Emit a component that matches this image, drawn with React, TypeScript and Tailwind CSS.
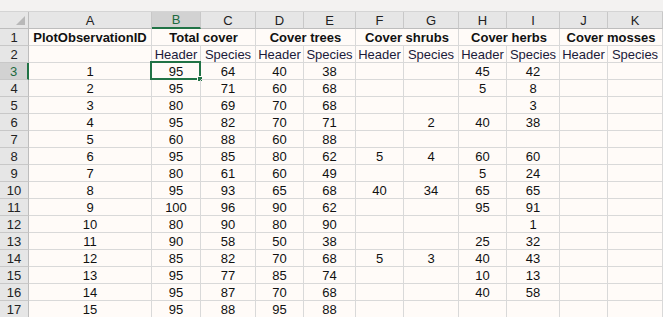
import React from "react";

const cols = [
  { key: "A", w: "w-[123px]" },
  { key: "B", w: "w-[49px]" },
  { key: "C", w: "w-[55px]" },
  { key: "D", w: "w-[48px]" },
  { key: "E", w: "w-[52px]" },
  { key: "F", w: "w-[48px]" },
  { key: "G", w: "w-[55px]" },
  { key: "H", w: "w-[48px]" },
  { key: "I", w: "w-[53px]" },
  { key: "J", w: "w-[48px]" },
  { key: "K", w: "w-[55px]" },
];

// merged header cells of row 1: label + column span + width
const groups = [
  { label: "Total cover", w: "w-[104px]" },
  { label: "Cover trees", w: "w-[100px]" },
  { label: "Cover shrubs", w: "w-[103px]" },
  { label: "Cover herbs", w: "w-[101px]" },
  { label: "Cover mosses", w: "w-[103px]" },
];

const data: (string | number)[][] = [
  [1, 95, 64, 40, 38, "", "", 45, 42, "", ""],
  [2, 95, 71, 60, 68, "", "", 5, 8, "", ""],
  [3, 80, 69, 70, 68, "", "", "", 3, "", ""],
  [4, 95, 82, 70, 71, "", 2, 40, 38, "", ""],
  [5, 60, 88, 60, 88, "", "", "", "", "", ""],
  [6, 95, 85, 80, 62, 5, 4, 60, 60, "", ""],
  [7, 80, 61, 60, 49, "", "", 5, 24, "", ""],
  [8, 95, 93, 65, 68, 40, 34, 65, 65, "", ""],
  [9, 100, 96, 90, 62, "", "", 95, 91, "", ""],
  [10, 80, 90, 80, 90, "", "", "", 1, "", ""],
  [11, 90, 58, 50, 38, "", "", 25, 32, "", ""],
  [12, 85, 82, 70, 68, 5, 3, 40, 43, "", ""],
  [13, 95, 77, 85, 74, "", "", 10, 13, "", ""],
  [14, 95, 87, 70, 68, "", "", 40, 58, "", ""],
  [15, 95, 88, 95, 88, "", "", "", "", "", ""],
];

function RowHead({ n, active }: { n: number; active?: boolean }) {
  return (
    <div
      className={
        "w-[29px] shrink-0 h-[17px] flex items-center justify-center border-b border-[#c8c8c8] " +
        (active
          ? "bg-[#d2d2d2] text-[#1d6a40] border-r-2 border-r-[#217346]"
          : "bg-[#e6e6e6] text-[#222] border-r border-r-[#bdbdbd]")
      }
    >
      {n}
    </div>
  );
}

export default function App() {
  return (
    <div
      className="w-[663px] h-[317px] overflow-hidden bg-[#fffbf8] text-[13px] leading-none text-[#111]"
      style={{ fontFamily: "'Liberation Sans', Arial, sans-serif" }}
    >
      {/* formula bar strip */}
      <div className="h-[12px] bg-[#f3f2f1] border-b border-[#d4d4d4]" />

      {/* column letters */}
      <div className="flex h-[17px]">
        <div className="w-[29px] shrink-0 bg-[#e6e6e6] border-r border-b border-[#bdbdbd] relative">
          <div className="absolute right-[3px] bottom-[3px] w-0 h-0 border-l-[9px] border-l-transparent border-b-[9px] border-b-[#b8b8b8]" />
        </div>
        {cols.map((c) => (
          <div
            key={c.key}
            className={
              c.w +
              " shrink-0 flex items-center justify-center border-r border-[#c8c8c8] " +
              (c.key === "B"
                ? "bg-[#d2d2d2] text-[#1d6a40] border-b-2 border-b-[#217346]"
                : "bg-[#e6e6e6] text-[#222] border-b border-b-[#bdbdbd]")
            }
          >
            {c.key}
          </div>
        ))}
      </div>

      {/* row 1: group titles */}
      <div className="flex h-[17px]">
        <RowHead n={1} />
        <div className="w-[123px] shrink-0 flex items-center justify-center font-bold border-r border-b border-[#d9d9d9]">
          PlotObservationID
        </div>
        {groups.map((g) => (
          <div
            key={g.label}
            className={g.w + " shrink-0 flex items-center justify-center font-bold border-r border-b border-[#d9d9d9]"}
          >
            {g.label}
          </div>
        ))}
      </div>

      {/* row 2: sub headers */}
      <div className="flex h-[17px]">
        <RowHead n={2} />
        {cols.map((c, i) => (
          <div
            key={c.key}
            className={c.w + " shrink-0 flex items-center justify-center text-[#1a1a3a] border-r border-b border-[#d9d9d9]"}
          >
            {i === 0 ? "" : i % 2 === 1 ? "Header" : "Species"}
          </div>
        ))}
      </div>

      {data.map((row, r) => (
        <div key={r} className="flex h-[17px]">
          <RowHead n={r + 3} active={r === 0} />
          {cols.map((c, i) => {
            const sel = r === 0 && i === 1;
            return (
              <div
                key={c.key}
                className={
                  c.w +
                  " shrink-0 flex items-center justify-center border-r border-b border-[#d9d9d9] relative"
                }
              >
                {row[i]}
                {sel && (
                  <>
                    <div className="absolute -left-[2px] -top-[2px] -right-[1px] -bottom-[1px] border-2 border-[#217346]" />
                    <div className="absolute -right-[3px] -bottom-[3px] w-[6px] h-[6px] bg-[#217346] border border-[#fffbf8]" />
                  </>
                )}
              </div>
            );
          })}
        </div>
      ))}
    </div>
  );
}
